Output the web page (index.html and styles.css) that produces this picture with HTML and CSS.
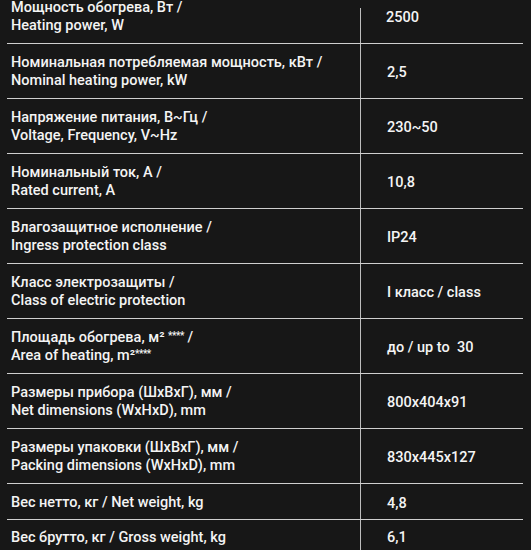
FILE: index.html
```html
<!DOCTYPE html>
<html lang="ru">
<head>
<meta charset="utf-8">
<title>Технические характеристики</title>
<link rel="stylesheet" href="styles.css">
</head>
<body>
<div class="sheet">
  <div class="spec">
    <div class="row first">
      <div class="name"><span>Мощность обогрева, Вт /<br>Heating power, W</span></div>
      <div class="val">2500</div>
    </div>
    <div class="row">
      <div class="name"><span>Номинальная потребляемая мощность, кВт /<br>Nominal heating power, kW</span></div>
      <div class="val">2,5</div>
    </div>
    <div class="row">
      <div class="name"><span>Напряжение питания, В~Гц /<br>Voltage, Frequency, V~Hz</span></div>
      <div class="val">230~50</div>
    </div>
    <div class="row">
      <div class="name"><span>Номинальный ток, А /<br>Rated current, A</span></div>
      <div class="val">10,8</div>
    </div>
    <div class="row">
      <div class="name"><span>Влагозащитное исполнение /<br>Ingress protection class</span></div>
      <div class="val">IP24</div>
    </div>
    <div class="row">
      <div class="name"><span>Класс электрозащиты /<br>Class of electric protection</span></div>
      <div class="val">I класс / class</div>
    </div>
    <div class="row">
      <div class="name"><span>Площадь обогрева, м² <span class="ast">****</span> /<br>Area of heating, m²<span class="ast">****</span></span></div>
      <div class="val">до / up to&nbsp; 30</div>
    </div>
    <div class="row">
      <div class="name"><span>Размеры прибора (ШхВхГ), мм /<br>Net dimensions (WxHxD), mm</span></div>
      <div class="val">800x404x91</div>
    </div>
    <div class="row">
      <div class="name"><span>Размеры упаковки (ШхВхГ), мм /<br>Packing dimensions (WxHxD), mm</span></div>
      <div class="val">830x445x127</div>
    </div>
    <div class="row short">
      <div class="name"><span>Вес нетто, кг / Net weight, kg</span></div>
      <div class="val">4,8</div>
    </div>
    <div class="row last">
      <div class="name"><span>Вес брутто, кг / Gross weight, kg</span></div>
      <div class="val">6,1</div>
    </div>
  </div>
</div>
</body>
</html>
```

FILE: styles.css
```css
html, body {
  margin: 0;
  padding: 0;
  background: #171717;
}
.sheet {
  width: 531px;
  height: 550px;
  overflow: hidden;
  background: #171717;
}
.spec {
  margin: -11px 8px 0 7px;
  font-family: Roboto, "Noto Sans", sans-serif;
  font-weight: 500;
  font-size: 14.5px;
  line-height: 18px;
  color: #f4f4f4;
}
.row {
  display: grid;
  grid-template-columns: 353px 1fr;
  height: 55px;
  box-sizing: border-box;
  border-bottom: 1px solid #cfcfcf;
}
.name {
  display: flex;
  align-items: center;
  padding-left: 4px;
  padding-top: 2px;
}
.val {
  display: flex;
  align-items: center;
  padding-left: 26px;
  padding-top: 4px;
  border-left: 1px solid #bdbdbd;
}
.first .val {
  border-left: none;
  background: linear-gradient(#bdbdbd, #bdbdbd) left 19px / 1px 100% no-repeat;
}
.short {
  height: 36px;
}
.last {
  height: 40px;
  border-bottom: none;
}
.last .name, .last .val {
  align-items: flex-start;
  padding-top: 9px;
}
.ast {
  font-size: 10px;
  line-height: 0;
  vertical-align: 3px;
  letter-spacing: -0.5px;
}
```
